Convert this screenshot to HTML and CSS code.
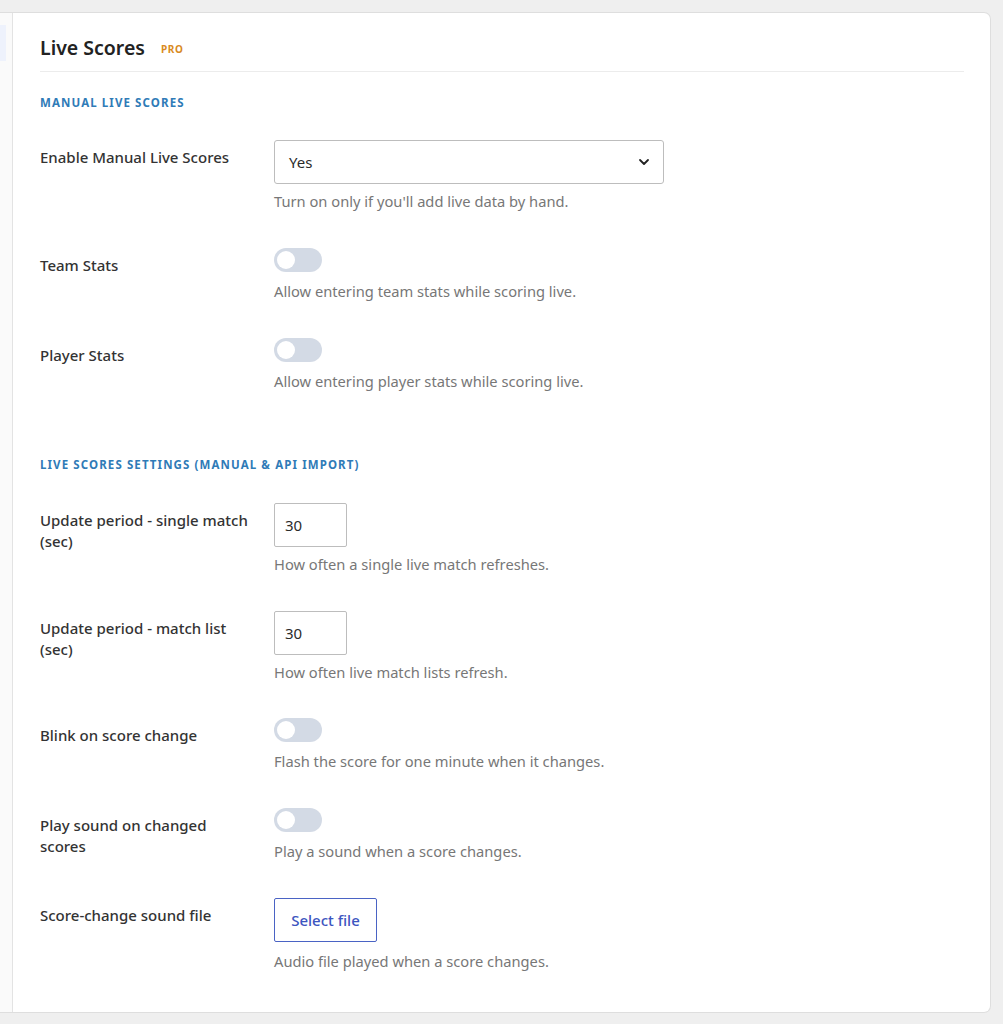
FILE: index.html
```html
<!DOCTYPE html>
<html lang="en">
<head>
    <meta charset="UTF-8">
    <meta name="viewport" content="width=device-width, initial-scale=1.0">
    <title>Live Scores</title>
    <link rel="stylesheet" href="styles.css">
</head>
<body>
    <div class="layout">
        <!-- Menú lateral (recortado) -->
        <div class="sidebar">
            <div class="side-item active"></div>
        </div>

        <div class="panel">
            <div class="panel-head">
                <h1>Live Scores</h1>
                <span class="badge-pro">PRO</span>
            </div>

            <!-- Manual live scores -->
            <h2 class="section-title">Manual Live Scores</h2>

            <div class="row">
                <label class="row-label" for="manual">Enable Manual Live Scores</label>
                <div class="row-field">
                    <div class="select">
                        <span>Yes</span>
                        <svg width="14" height="14" viewBox="0 0 14 14"><path d="M3 5l4 4 4-4" fill="none" stroke="#222" stroke-width="1.8" stroke-linecap="round" stroke-linejoin="round"/></svg>
                    </div>
                    <p class="desc">Turn on only if you'll add live data by hand.</p>
                </div>
            </div>

            <div class="row">
                <label class="row-label">Team Stats</label>
                <div class="row-field">
                    <span class="toggle"></span>
                    <p class="desc">Allow entering team stats while scoring live.</p>
                </div>
            </div>

            <div class="row">
                <label class="row-label">Player Stats</label>
                <div class="row-field">
                    <span class="toggle"></span>
                    <p class="desc">Allow entering player stats while scoring live.</p>
                </div>
            </div>

            <!-- Settings shared with API import -->
            <h2 class="section-title second">Live Scores Settings (Manual &amp; API Import)</h2>

            <div class="row">
                <label class="row-label">Update period - single match (sec)</label>
                <div class="row-field">
                    <div class="num-input">30</div>
                    <p class="desc">How often a single live match refreshes.</p>
                </div>
            </div>

            <div class="row tight">
                <label class="row-label">Update period - match list (sec)</label>
                <div class="row-field">
                    <div class="num-input">30</div>
                    <p class="desc">How often live match lists refresh.</p>
                </div>
            </div>

            <div class="row">
                <label class="row-label">Blink on score change</label>
                <div class="row-field">
                    <span class="toggle"></span>
                    <p class="desc">Flash the score for one minute when it changes.</p>
                </div>
            </div>

            <div class="row">
                <label class="row-label">Play sound on changed scores</label>
                <div class="row-field">
                    <span class="toggle"></span>
                    <p class="desc">Play a sound when a score changes.</p>
                </div>
            </div>

            <div class="row">
                <label class="row-label">Score-change sound file</label>
                <div class="row-field">
                    <button type="button" class="file-btn">Select file</button>
                    <p class="desc">Audio file played when a score changes.</p>
                </div>
            </div>
        </div>
    </div>
</body>
</html>
```

FILE: styles.css
```css
body {
    font-family: "Noto Sans", "Open Sans", sans-serif;
    margin: 0;
    background-color: #efefef;
    color: #2b2b2b;
}

.layout {
    display: flex;
    margin: 12px 12px 11px 0;
    background-color: #fff;
    border: 1px solid #dedede;
    border-left: none;
    border-radius: 0 7px 7px 0;
}

/* Menú lateral */
.sidebar {
    width: 12px;
    background-color: #fafafa;
    border-right: 1px solid #e3e3e3;
    padding-top: 12px;
}

.side-item.active {
    width: 6px;
    height: 36px;
    background-color: #eef2fc;
}

/* Contenedor principal */
.panel {
    flex-grow: 1;
    padding: 20px 26px 4px 27px;
}

.panel-head {
    display: flex;
    align-items: center;
    gap: 16px;
    padding: 1px 0 10px;
    border-bottom: 1px solid #ececec;
}

.panel-head h1 {
    margin: 0;
    font-size: 19.5px;
    font-weight: 600;
    color: #222;
}

.badge-pro {
    font-size: 10px;
    font-weight: 700;
    color: #d98a22;
    letter-spacing: 0.6px;
    padding-top: 2px;
}

.section-title {
    margin: 23px 0 29px;
    font-size: 11.5px;
    font-weight: 700;
    line-height: 16px;
    color: #2f7bb7;
    text-transform: uppercase;
    letter-spacing: 1.1px;
}

.section-title.second {
    margin-top: 65px;
    margin-bottom: 30px;
}

.row {
    display: grid;
    grid-template-columns: 234px 1fr;
    margin-bottom: 36px;
}

.row.tight {
    margin-bottom: 35px;
}

.row-label {
    padding: 7px 22px 0 0;
    font-size: 15px;
    font-weight: 500;
    line-height: 21px;
    color: #333;
}

.desc {
    margin: 7px 0 0;
    font-size: 14.7px;
    line-height: 21px;
    color: #777;
}

.toggle + .desc,
.file-btn + .desc {
    margin-top: 9px;
}

.select {
    box-sizing: border-box;
    width: 390px;
    height: 44px;
    display: flex;
    align-items: center;
    justify-content: space-between;
    padding: 0 12px 0 14px;
    border: 1px solid #bdbdbd;
    border-radius: 3px;
    font-size: 15px;
}

.toggle {
    display: block;
    position: relative;
    width: 48px;
    height: 24px;
    border-radius: 12px;
    background-color: #d3dae5;
}

.toggle::after {
    content: "";
    position: absolute;
    left: 3px;
    top: 3px;
    width: 18px;
    height: 18px;
    border-radius: 50%;
    background-color: #fff;
}

.num-input {
    box-sizing: border-box;
    width: 73px;
    height: 44px;
    padding: 10px 10px 0;
    border: 1px solid #bdbdbd;
    border-radius: 2px;
    font-size: 15px;
    line-height: 22px;
}

.file-btn {
    display: block;
    width: 103px;
    height: 44px;
    padding: 0;
    background-color: #fff;
    border: 1px solid #4a63c4;
    border-radius: 2px;
    color: #3d55c0;
    font-family: inherit;
    font-size: 15px;
    font-weight: 500;
    cursor: pointer;
}
```
